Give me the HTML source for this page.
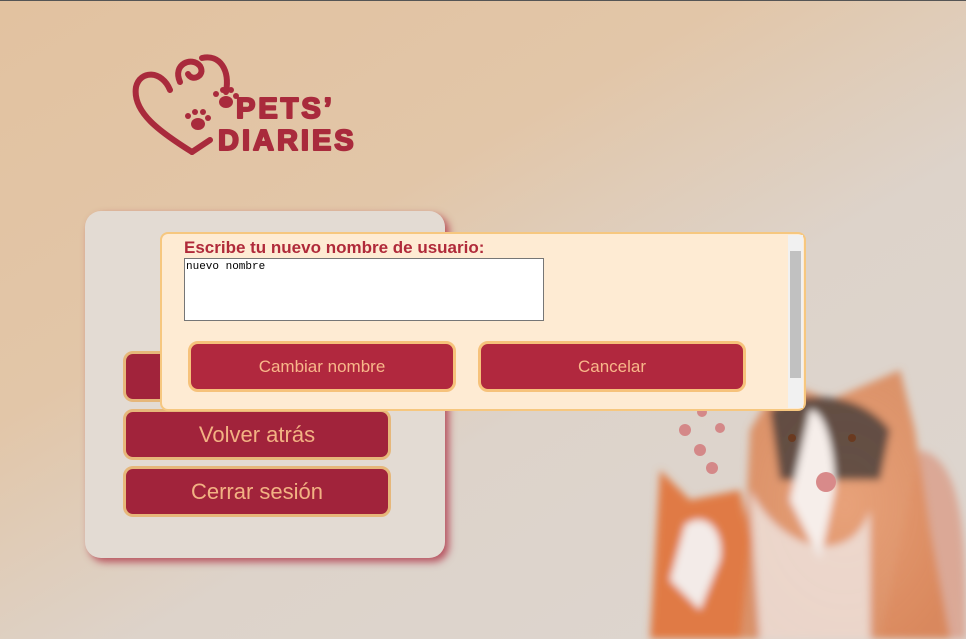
<!DOCTYPE html>
<html><head><meta charset="utf-8"><style>
*{box-sizing:border-box;margin:0;padding:0}
body{width:966px;height:639px;overflow:hidden;position:relative;font-family:"Liberation Sans",Arial,sans-serif;
background:linear-gradient(150deg,#e2c2a0 0%,#e2c6a8 35%,#ddd3ca 60%,#ddd6d0 100%)}
.tl{position:absolute;left:0;top:0;width:966px;height:1px;background:#555}
.card{position:absolute;left:85px;top:211px;width:360px;height:347px;background:#e3dbd3;border-radius:16px;box-shadow:4px 4px 8px rgba(170,40,60,.75)}
.b{position:absolute;left:123px;width:268px;height:51px;background:#a1233b;border:3px solid #e6b77a;border-radius:10px;color:#f2b283;font-size:22px;text-align:center;line-height:45px}
.modal{position:absolute;left:160px;top:232px;width:646px;height:179px;background:#feebd3;border:2px solid #f6c77f;border-radius:8px}
.lbl{position:absolute;left:22px;top:4px;font-weight:bold;font-size:17px;color:#b02a3a}
.ta{position:absolute;left:22px;top:24px;width:360px;height:63px;background:#fff;border:1px solid #767676;font-family:"Liberation Mono",monospace;font-size:11px;padding:2px 1px;color:#000}
.mb{position:absolute;top:107px;width:268px;height:51px;background:#b1283e;border:3px solid #f6c27b;border-radius:10px;color:#f8b88a;font-size:17px;text-align:center;line-height:45px}
.sb{position:absolute;right:1px;top:1px;width:15px;height:173px;background:#f1f1f1}
.th{position:absolute;left:2px;top:16px;width:11px;height:127px;background:#c1c1c1}
.logo{position:absolute;left:130px;top:52px}
</style></head><body>
<div class="tl"></div>
<svg class="logo" width="240" height="110" viewBox="0 0 240 110">
<g fill="none" stroke="#a92a3c" stroke-width="6" stroke-linecap="round">
<path d="M62 100 C30 80 2 60 6 35 C10 18 32 18 40 38"/>
<path d="M62 100 L80 88"/>
<path d="M50 30 C42 12 62 4 70 14 C76 24 62 30 58 22"/>
<path d="M72 6 C90 2 100 18 96 40"/>
</g>
<g fill="#a92a3c">
<ellipse cx="96" cy="50" rx="7" ry="6"/><circle cx="86" cy="42" r="3"/><circle cx="93" cy="38" r="3"/><circle cx="101" cy="38" r="3"/><circle cx="106" cy="44" r="3"/>
<ellipse cx="68" cy="72" rx="7" ry="6"/><circle cx="58" cy="64" r="3"/><circle cx="65" cy="60" r="3"/><circle cx="73" cy="60" r="3"/><circle cx="78" cy="66" r="3"/>
<g stroke="#a92a3c" stroke-width="2" stroke-linejoin="round">
<text x="106" y="66" font-family="Liberation Sans" font-weight="bold" font-size="29" letter-spacing="3">PETS’</text>
<text x="88" y="98" font-family="Liberation Sans" font-weight="bold" font-size="29" letter-spacing="3">DIARIES</text>
</g></g></svg>

<svg style="position:absolute;left:630px;top:350px" width="336" height="289" viewBox="0 0 336 289">
<defs><radialGradient id="o" cx=".5" cy=".5" r=".6"><stop offset="0" stop-color="#e8a27a"/><stop offset="1" stop-color="#d9804f" stop-opacity=".8"/></radialGradient>
<filter id="bl"><feGaussianBlur stdDeviation="4"/></filter></defs>
<g filter="url(#bl)">
<path d="M290 100 C336 110 336 200 336 289 L250 289 Z" fill="#d88a70" opacity=".6"/>
<path d="M120 80 L150 30 L200 50 L270 20 L285 80 L300 180 L320 289 L110 289 Z" fill="url(#o)"/>
<path d="M140 60 C170 40 230 40 260 80 L250 130 L150 130 Z" fill="#3a3636" opacity=".75"/>
<path d="M180 60 C195 60 205 100 205 140 L190 210 L160 150 Z" fill="#f6eeea"/>
<path d="M120 140 C150 200 220 220 240 160 L240 289 L130 289 Z" fill="#efe6e2" opacity=".8"/>
<path d="M30 120 L60 150 L110 140 L120 190 L110 289 L20 289 Z" fill="#e07a45"/>
<path d="M55 175 C75 160 95 180 90 210 L70 260 L40 230 Z" fill="#f3ebe8"/>
</g>
<circle cx="196" cy="132" r="10" fill="#d88a8a"/>
<circle cx="162" cy="88" r="4" fill="#6a3a20"/><circle cx="222" cy="88" r="4" fill="#6a3a20"/>
<g fill="#d48888"><circle cx="55" cy="80" r="6"/><circle cx="70" cy="100" r="6"/><circle cx="82" cy="118" r="6"/><circle cx="90" cy="78" r="5"/><circle cx="72" cy="62" r="5"/></g>
</svg>

<div class="card"></div>
<div class="b" style="top:351px"></div>
<div class="b" style="top:409px">Volver atrás</div>
<div class="b" style="top:466px">Cerrar sesión</div>

<div class="modal">
<div class="lbl">Escribe tu nuevo nombre de usuario:</div>
<div class="ta">nuevo nombre</div>
<div class="mb" style="left:26px">Cambiar nombre</div>
<div class="mb" style="left:316px">Cancelar</div>
<div class="sb"><div class="th"></div></div>
</div>
</body></html>
